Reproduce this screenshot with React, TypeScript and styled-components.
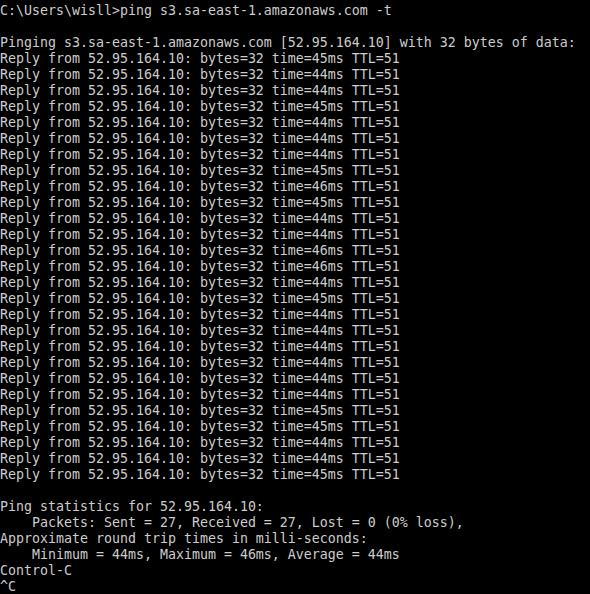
import React from "react";
import styled, { createGlobalStyle } from "styled-components";

const Global = createGlobalStyle`
  html, body { margin: 0; padding: 0; background: #000; }
  #root { width: 590px; height: 594px; }
`;

const Console = styled.div`
  width: 590px;
  height: 594px;
  box-sizing: border-box;
  background: #000;
  color: #cccccc;
  font-family: "DejaVu Sans Mono", "Liberation Mono", monospace;
  font-size: 13.29px;
  line-height: 16px;
  padding: 3px 0 0 0;
  overflow: hidden;
`;

const Line = styled.div`
  white-space: pre;
  height: 16px;
`;

const times = [45, 44, 44, 45, 44, 44, 44, 45, 46, 45, 44, 44, 46, 46, 44, 45, 44, 44, 44, 44, 44, 44, 45, 45, 44, 44, 45];

export default function App() {
  const lines: string[] = [
    "C:\\Users\\wisll>ping s3.sa-east-1.amazonaws.com -t",
    "",
    "Pinging s3.sa-east-1.amazonaws.com [52.95.164.10] with 32 bytes of data:",
    ...times.map((t) => `Reply from 52.95.164.10: bytes=32 time=${t}ms TTL=51`),
    "",
    "Ping statistics for 52.95.164.10:",
    "    Packets: Sent = 27, Received = 27, Lost = 0 (0% loss),",
    "Approximate round trip times in milli-seconds:",
    "    Minimum = 44ms, Maximum = 46ms, Average = 44ms",
    "Control-C",
    "^C",
  ];
  return (
    <>
      <Global />
      <Console>
        {lines.map((l, i) => (
          <Line key={i}>{l}</Line>
        ))}
      </Console>
    </>
  );
}
